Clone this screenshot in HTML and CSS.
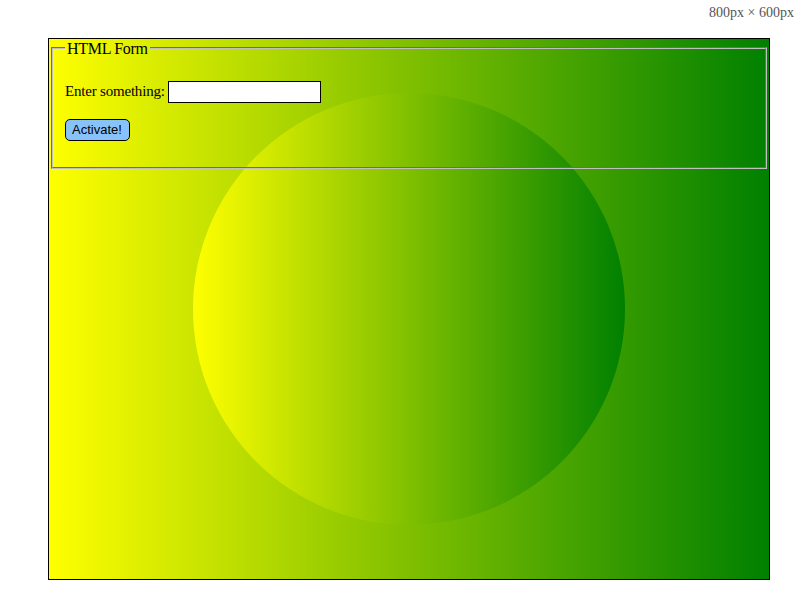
FILE: index.html
```html
<!DOCTYPE html>
<html>
<head>
<meta charset="utf-8">
<link rel="stylesheet" href="styles.css">
</head>
<body>
<div class="size">800px × 600px</div>
<div class="stage">
  <div class="circle"></div>
  <form class="form">
    <fieldset class="fs">
      <legend class="lg">HTML Form</legend>
      <p class="row first"><label class="lbl">Enter something: <input type="text" class="inp"></label></p>
      <p class="row"><button type="button" class="btn">Activate!</button></p>
    </fieldset>
  </form>
</div>
</body>
</html>
```
FILE: styles.css
```css
html, body {
  margin: 0;
  padding: 0;
  background: #fff;
  font-family: "Liberation Serif", "Times New Roman", serif;
  font-size: 16px;
}
.size {
  text-align: right;
  font-size: 14px;
  color: #555;
  height: 38px;
  line-height: 26px;
  padding-right: 6px;
}
.stage {
  position: relative;
  margin-left: 48px;
  width: 720px;
  height: 540px;
  border: 1px solid #000;
  background: linear-gradient(to right, #ffff00, #008000);
  overflow: hidden;
}
.circle {
  position: absolute;
  left: 144px;
  top: 54px;
  width: 432px;
  height: 432px;
  border-radius: 50%;
  background: linear-gradient(to right, #ffff00, #008000);
}
.form {
  position: relative;
  margin: 0;
}
.fs {
  margin: 0 2px;
  border: 2px groove #c0c0c0;
  padding: 0.35em 0.75em 0.625em;
}
.lg {
  padding: 0 2px;
  letter-spacing: -0.3px;
  position: relative;
  top: 1px;
}
.row {
  margin: 16px 0;
}
.row.first {
  margin-top: 18px;
}
.lbl {
  font-size: 15px;
  letter-spacing: -0.2px;
}
.inp {
  width: 147px;
  height: 18px;
  border: 1px solid #000;
  padding: 1px 2px;
  margin-left: 0;
  background: #fff;
  vertical-align: baseline;
  font-size: 13px;
}
.btn {
  font-family: "Liberation Sans", Arial, sans-serif;
  font-size: 13px;
  background: #87c3fa;
  border: 1px solid #000;
  border-radius: 5px;
  padding: 2px 7px 2px 6px;
  height: 22px;
  color: #000;
}
```
